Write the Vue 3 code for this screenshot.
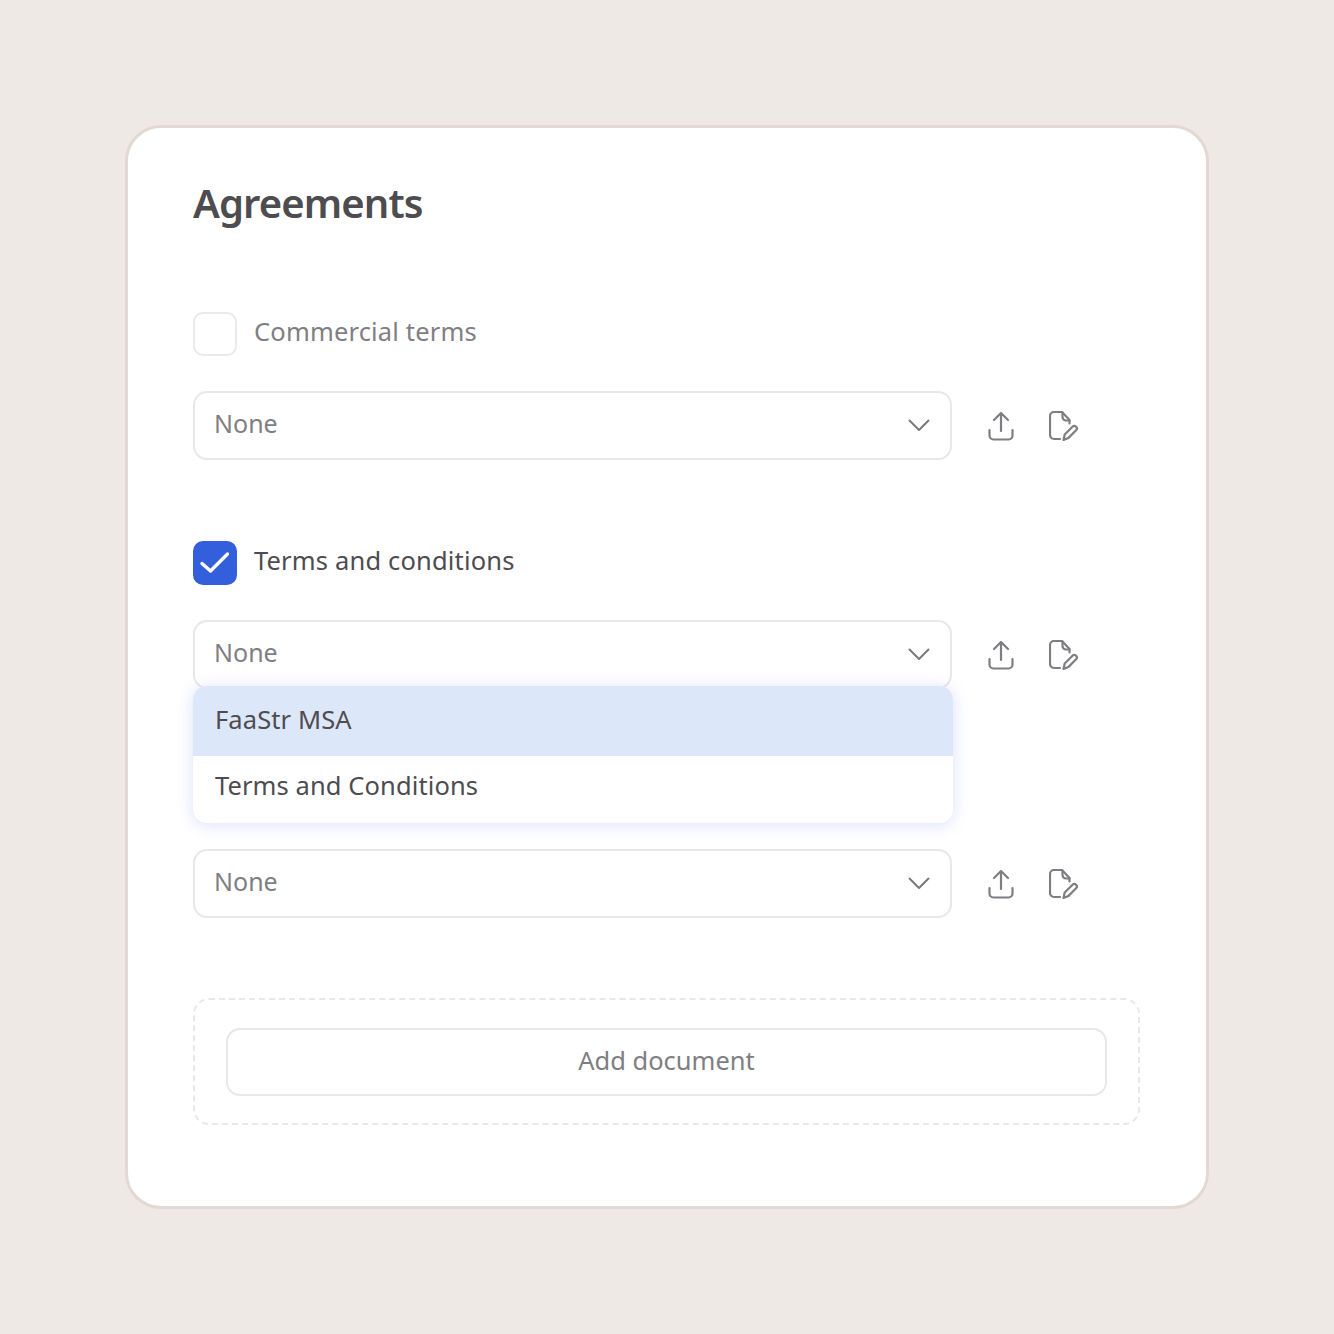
<template>
  <div class="page">
    <div class="card">
      <h1 class="title">Agreements</h1>

      <div v-for="group in groups" :key="group.id" class="group">
        <div class="check-row">
          <span class="checkbox" :class="{ checked: group.checked }">
            <svg v-if="group.checked" width="44" height="44" viewBox="0 0 44 44" fill="none">
              <path d="M9 22.500l8.500 7.500 17-17" stroke="#fff" stroke-width="3.400" stroke-linecap="round" stroke-linejoin="round" />
            </svg>
          </span>
          <span v-if="group.label" class="label" :class="{ active: group.checked }">{{ group.label }}</span>
        </div>

        <div class="select-row">
          <div class="select-wrap">
            <div class="select">
              <span class="value">None</span>
              <svg class="chevron" width="22" height="14" viewBox="0 0 22 14" fill="none">
                <path d="M1.500 2.500L11 12l9.500-9.500" stroke="#7b797e" stroke-width="2" stroke-linecap="round" stroke-linejoin="round" />
              </svg>
            </div>
            <ul v-if="group.open" class="menu">
              <li v-for="(opt, i) in options" :key="opt" class="option" :class="{ hover: i === 0 }">{{ opt }}</li>
            </ul>
          </div>

          <button class="icon-btn upload">
            <svg width="26" height="30" viewBox="0 0 26 30" fill="none">
              <path d="M13 20V2M6 9l7-7 7 7M1.500 19v5.500a4 4 0 0 0 4 4h15a4 4 0 0 0 4-4V19" stroke="#7f7d82" stroke-width="2.200" stroke-linecap="round" stroke-linejoin="round" />
            </svg>
          </button>
          <button class="icon-btn edit">
            <svg width="30" height="30" viewBox="0 0 30 30" fill="none">
              <path d="M11 28H5a4 4 0 0 1-4-4V5a4 4 0 0 1 4-4h8l7.500 8v3.500" stroke="#7f7d82" stroke-width="2.200" stroke-linecap="round" stroke-linejoin="round" />
              <path d="M13.500 1.500V6a3.500 3.500 0 0 0 3.500 3.500h3.500" stroke="#7f7d82" stroke-width="2.200" stroke-linecap="round" stroke-linejoin="round" />
              <path d="M14.500 29l1.200-5.500 7.800-7.800a2.500 2.500 0 0 1 3.600 3.600l-7.800 7.800z" stroke="#7f7d82" stroke-width="2.200" stroke-linejoin="round" />
            </svg>
          </button>
        </div>
      </div>

      <div class="add-box">
        <button class="add-btn">Add document</button>
      </div>
    </div>
  </div>
</template>

<script setup>
const groups = [
  { id: 1, label: "Commercial terms", checked: false, open: false },
  { id: 2, label: "Terms and conditions", checked: true, open: true },
  { id: 3, label: "", checked: false, open: false },
];

const options = ["FaaStr MSA", "Terms and Conditions"];
</script>

<style>
html, body { margin: 0; background: #efe9e5; }
</style>

<style scoped>
.page {
  width: 1334px;
  height: 1334px;
  box-sizing: border-box;
  padding: 125px;
  background: #efe9e5;
  font-family: "Noto Sans", "Open Sans", sans-serif;
}
.card {
  width: 1084px;
  height: 1084px;
  box-sizing: border-box;
  padding: 48px 65px 0;
  background: #fff;
  border: 3px solid #e0d9d4;
  border-radius: 36px;
}
.title {
  margin: 0 0 82px;
  height: 54px;
  line-height: 54px;
  font-size: 40px;
  font-weight: 600;
  letter-spacing: -0.9px;
  color: #4d4c4f;
}
.group { margin-bottom: 81px; }
.check-row {
  display: flex;
  align-items: center;
  gap: 17px;
  height: 44px;
  margin-bottom: 35px;
}
.checkbox {
  width: 44px;
  height: 44px;
  box-sizing: border-box;
  border: 2px solid #ebe9ec;
  border-radius: 10px;
  background: #fff;
  position: relative;
}
.checkbox.checked {
  background: #335fdc;
  border-color: #335fdc;
}
.checkbox svg {
  position: absolute;
  left: -2px;
  top: -2px;
}
.label {
  padding-bottom: 6px;
  font-size: 25.500px;
  letter-spacing: 0.17px;
  color: #807e83;
}
.label.active { color: #4d4c4f; }
.select-row {
  display: flex;
  align-items: center;
}
.select-wrap {
  position: relative;
  width: 759px;
}
.select {
  height: 69px;
  box-sizing: border-box;
  padding: 0 20px 0 19px;
  border: 2px solid #e9e7ea;
  border-radius: 14px;
  display: flex;
  align-items: center;
  justify-content: space-between;
  font-size: 25px;
  color: #807e83;
}
.value { padding-bottom: 6px; }
.chevron { margin-bottom: 2px; }
.menu {
  position: absolute;
  left: 0;
  top: 66px;
  width: 760px;
  margin: 0;
  padding: 0;
  list-style: none;
  background: #fff;
  border-radius: 14px;
  overflow: hidden;
  box-shadow: 0 2px 16px rgba(85, 115, 250, 0.22);
  z-index: 2;
}
.option {
  height: 67px;
  box-sizing: border-box;
  padding: 0 0 10px 22px;
  display: flex;
  align-items: center;
  font-size: 25.500px;
  letter-spacing: 0.1px;
  color: #4d4c4f;
}
.option.hover {
  height: 70px;
  padding-bottom: 4px;
  background: #dde7fa;
}
.icon-btn {
  padding: 0;
  border: 0;
  background: none;
  display: flex;
}
.upload { margin-left: 36px; }
.edit { margin-left: 35px; }
.add-box {
  width: 947px;
  height: 127px;
  margin-top: -1px;
  box-sizing: border-box;
  padding: 28px 31px;
  border: 2px dashed #e9e7ea;
  border-radius: 16px;
}
.add-btn {
  width: 100%;
  height: 68px;
  padding: 0 0 4px;
  background: #fff;
  border: 2px solid #e9e7ea;
  border-radius: 14px;
  font-family: inherit;
  font-size: 25.500px;
  color: #807e83;
}
</style>
